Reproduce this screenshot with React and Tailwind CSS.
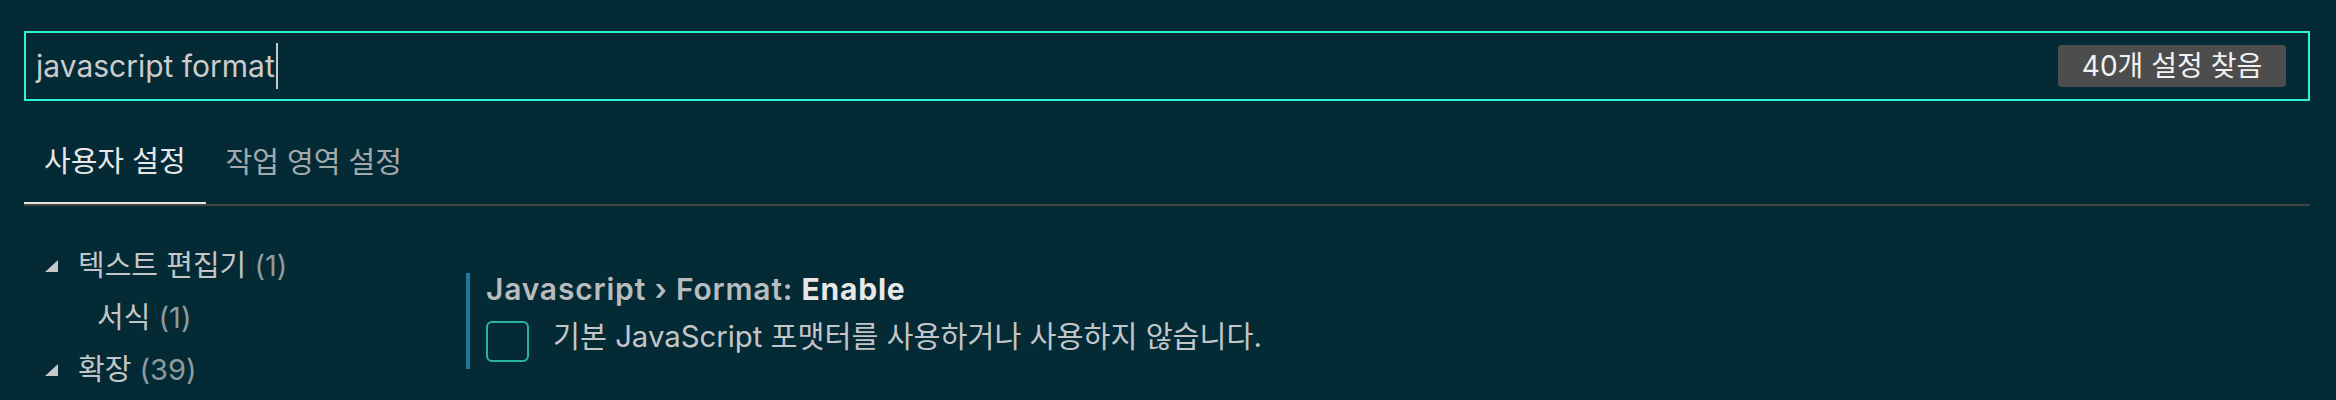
import React from "react";

function Twistie() {
  return (
    <svg width="14" height="12" viewBox="0 0 14 12" className="shrink-0">
      <polygon points="13,0 13,12 0,12" fill="#c5c8c8" />
    </svg>
  );
}

export default function App() {
  const font = { fontFamily: 'Inter, "Noto Sans CJK KR", sans-serif' };
  return (
    <div
      className="w-full h-[400px] overflow-hidden bg-[#042a36] flex flex-col"
      style={font}
    >
      {/* search */}
      <div className="pt-[31px] pl-[24px] pr-[26px]">
        <div className="h-[70px] border-2 border-[#2df4d7] flex items-center pl-[10px] pr-[22px]">
          <div className="flex-1 flex items-center text-[30px] text-[#cccccc]">
            <span>javascript format</span>
            <span className="ml-[1px] w-[2px] h-[46px] bg-[#c8c8c8]" />
          </div>
          <div className="h-[42px] w-[228px] rounded-[4px] bg-[#4d4d4d] text-[#f2f2f2] text-[28px] flex items-center justify-center">
            40개 설정 찾음
          </div>
        </div>
      </div>

      {/* tabs */}
      <div className="mt-[21px] ml-[24px] mr-[26px] flex border-b-2 border-[#444444]">
        <div className="h-[82px] px-[20px] flex items-center text-[29px] text-[#e8e8e8] border-b-2 border-[#e6e6e6] -mb-[2px]">
          사용자 설정
        </div>
        <div className="h-[82px] px-[20px] flex items-center text-[29px] text-[#a3aaab]">
          작업 영역 설정
        </div>
      </div>

      {/* body */}
      <div className="flex ml-[24px]">
        <div className="w-[442px] pt-[34px] text-[29px]">
          <div className="h-[52px] flex items-center pl-[21px] gap-[19px]">
            <Twistie />
            <span className="text-[#c2c6c6]">
              텍스트 편집기 <span className="text-[#8f9c9d]">(1)</span>
            </span>
          </div>
          <div className="h-[52px] flex items-center pl-[73px]">
            <span className="text-[#c2c6c6]">
              서식 <span className="text-[#8f9c9d]">(1)</span>
            </span>
          </div>
          <div className="h-[52px] flex items-center pl-[21px] gap-[19px]">
            <Twistie />
            <span className="text-[#c2c6c6]">
              확장 <span className="text-[#8f9c9d]">(39)</span>
            </span>
          </div>
        </div>

        <div className="mt-[67px] self-start border-l-4 border-[#1c7b9b] pl-[16px] pb-[7px]">
          <div className="text-[30px] leading-[32px] font-semibold tracking-[0.8px] text-[#b9bcbd]">
            Javascript › Format: <span className="font-bold text-[#e8e8e8]">Enable</span>
          </div>
          <div className="mt-[16px] flex items-start">
            <div className="w-[43px] h-[41px] rounded-[6px] border-2 border-[#27b5a2] shrink-0" />
            <div className="ml-[24px] text-[29.3px] leading-[32px] text-[#c3c6c7]">
              기본 JavaScript 포맷터를 사용하거나 사용하지 않습니다.
            </div>
          </div>
        </div>
      </div>
    </div>
  );
}
